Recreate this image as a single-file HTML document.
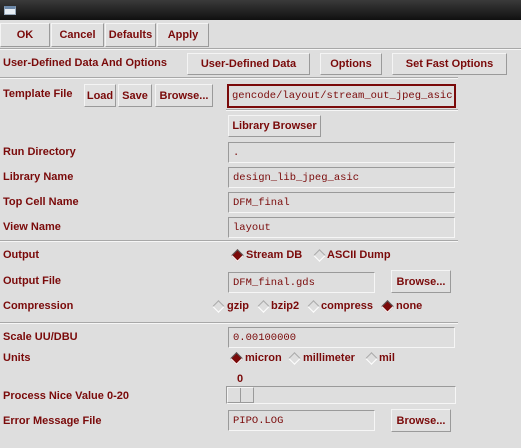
<!DOCTYPE html>
<html><head><style>
*{box-sizing:border-box;margin:0;padding:0}
body{width:521px;height:448px;background:#dedede;position:relative;overflow:hidden;font-family:"Liberation Sans",sans-serif;font-weight:bold;font-size:11px;color:#7a0a0a}
.a{position:absolute;white-space:nowrap}
.btn{position:absolute;border:1px solid;border-color:#f4f4f4 #9a9a9a #9a9a9a #f4f4f4;background:#e0e0e0;text-align:center;display:flex;align-items:center;justify-content:center}
.fld{position:absolute;border:1px solid;border-color:#9a9a9a #f6f6f6 #f6f6f6 #9a9a9a;background:#dedede;font-family:"Liberation Mono",monospace;font-weight:normal;font-size:10.5px;padding-left:4px;display:flex;align-items:center;color:#7a0a0a}
.sep{position:absolute;left:0;height:2px;border-top:1px solid #a8a8a8;border-bottom:1px solid #f6f6f6}
.lbl{position:absolute;left:3px}
.d{position:absolute;width:9px;height:9px;transform:rotate(45deg);border:1px solid;border-color:#aaa #fff #fff #aaa}
.d.on{background:#7a0a0a;border-color:#555 #fff #fff #555}
</style></head><body>
<div class="a" style="left:0;top:0;width:521px;height:20px;background:linear-gradient(#3a3a3a,#101010)"></div>
<div class="a" style="left:4px;top:6px;width:12px;height:9px;background:#e8eef4;border:1px solid #9ab;border-top:3px solid #6c88a8"></div>

<div class="btn" style="left:0;top:23px;width:50px;height:24px">OK</div>
<div class="btn" style="left:51px;top:23px;width:53px;height:24px">Cancel</div>
<div class="btn" style="left:105px;top:23px;width:51px;height:24px">Defaults</div>
<div class="btn" style="left:157px;top:23px;width:52px;height:24px">Apply</div>
<div class="sep" style="top:48px;width:521px"></div>

<div class="lbl" style="top:57px">User-Defined Data And Options</div>
<div class="btn" style="left:187px;top:53px;width:123px;height:22px">User-Defined Data</div>
<div class="btn" style="left:320px;top:53px;width:62px;height:22px">Options</div>
<div class="btn" style="left:392px;top:53px;width:115px;height:22px">Set Fast Options</div>
<div class="sep" style="top:77px;width:458px"></div>

<div class="lbl" style="top:88px">Template File</div>
<div class="btn" style="left:84px;top:84px;width:32px;height:23px">Load</div>
<div class="btn" style="left:118px;top:84px;width:34px;height:23px">Save</div>
<div class="btn" style="left:155px;top:84px;width:58px;height:23px">Browse...</div>
<div class="fld" style="left:227px;top:84px;width:229px;height:24px;border:2px solid #7a0a0a;padding-left:3px;overflow:hidden">gencode/layout/stream_out_jpeg_asic</div>
<div class="sep" style="top:109px;left:226px;width:232px"></div>

<div class="btn" style="left:228px;top:115px;width:93px;height:22px">Library Browser</div>

<div class="lbl" style="top:146px">Run Directory</div>
<div class="fld" style="left:228px;top:142px;width:227px;height:21px">.</div>
<div class="lbl" style="top:171px">Library Name</div>
<div class="fld" style="left:228px;top:167px;width:227px;height:21px">design_lib_jpeg_asic</div>
<div class="lbl" style="top:196px">Top Cell Name</div>
<div class="fld" style="left:228px;top:192px;width:227px;height:21px">DFM_final</div>
<div class="lbl" style="top:221px">View Name</div>
<div class="fld" style="left:228px;top:217px;width:227px;height:21px">layout</div>
<div class="sep" style="top:240px;width:458px"></div>

<div class="lbl" style="top:249px">Output</div>
<div class="d on" style="left:233px;top:251px"></div><div class="a" style="left:246px;top:249px">Stream DB</div>
<div class="d" style="left:315px;top:251px"></div><div class="a" style="left:327px;top:249px">ASCII Dump</div>

<div class="lbl" style="top:275px">Output File</div>
<div class="fld" style="left:228px;top:272px;width:147px;height:21px">DFM_final.gds</div>
<div class="btn" style="left:391px;top:270px;width:60px;height:23px">Browse...</div>

<div class="lbl" style="top:300px">Compression</div>
<div class="d" style="left:214px;top:302px"></div><div class="a" style="left:227px;top:300px">gzip</div>
<div class="d" style="left:259px;top:302px"></div><div class="a" style="left:271px;top:300px">bzip2</div>
<div class="d" style="left:309px;top:302px"></div><div class="a" style="left:321px;top:300px">compress</div>
<div class="d on" style="left:383px;top:302px"></div><div class="a" style="left:396px;top:300px">none</div>
<div class="sep" style="top:322px;width:458px"></div>

<div class="lbl" style="top:331px">Scale UU/DBU</div>
<div class="fld" style="left:228px;top:327px;width:227px;height:21px">0.00100000</div>
<div class="lbl" style="top:352px">Units</div>
<div class="d on" style="left:232px;top:354px"></div><div class="a" style="left:245px;top:352px">micron</div>
<div class="d" style="left:290px;top:354px"></div><div class="a" style="left:303px;top:352px">millimeter</div>
<div class="d" style="left:367px;top:354px"></div><div class="a" style="left:379px;top:352px">mil</div>

<div class="a" style="left:237px;top:373px">0</div>
<div class="lbl" style="top:390px">Process Nice Value 0-20</div>
<div class="a" style="left:226px;top:386px;width:230px;height:18px;border:1px solid;border-color:#9a9a9a #f6f6f6 #f6f6f6 #9a9a9a"></div>
<div class="a" style="left:227px;top:387px;width:27px;height:16px;border:1px solid;border-color:#f4f4f4 #9a9a9a #9a9a9a #f4f4f4"><div style="position:absolute;left:12px;top:0;width:1px;height:14px;background:#9a9a9a"></div></div>

<div class="lbl" style="top:415px">Error Message File</div>
<div class="fld" style="left:228px;top:410px;width:147px;height:21px">PIPO.LOG</div>
<div class="btn" style="left:391px;top:409px;width:60px;height:23px">Browse...</div>
</body></html>
